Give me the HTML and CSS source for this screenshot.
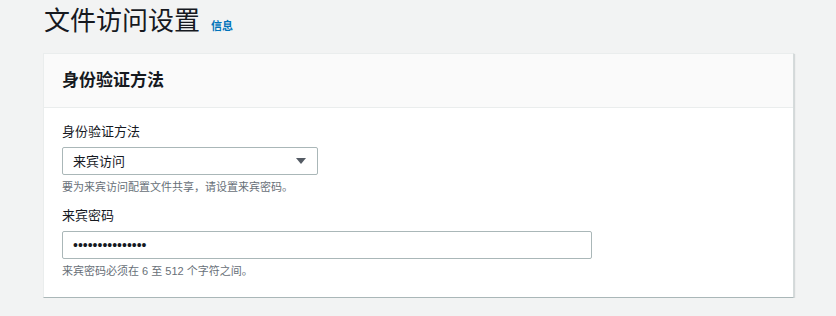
FILE: index.html
```html
<!DOCTYPE html>
<html lang="zh-CN">
<head>
    <meta charset="UTF-8">
    <meta name="viewport" content="width=device-width, initial-scale=1.0">
    <title>文件访问设置</title>
    <link rel="stylesheet" href="styles.css">
</head>
<body>
    <div class="page-title">
        <h1>文件访问设置</h1>
        <a href="#" class="info-link">信息</a>
    </div>

    <div class="panel">
        <div class="panel-header">
            <h2>身份验证方法</h2>
        </div>
        <div class="panel-body">
            <div class="form-field">
                <label for="authMethod">身份验证方法</label>
                <div class="select-wrap">
                    <select id="authMethod">
                        <option>来宾访问</option>
                        <option>Active Directory</option>
                    </select>
                    <svg class="select-arrow" width="10" height="6" viewBox="0 0 10 6">
                        <path d="M0 0 H10 L5 6 Z" fill="#545b64"/>
                    </svg>
                </div>
                <div class="hint">要为来宾访问配置文件共享，请设置来宾密码。</div>
            </div>

            <div class="form-field">
                <label for="guestPassword">来宾密码</label>
                <input type="password" id="guestPassword" class="text-input" value="guestpassword12">
                <div class="hint">来宾密码必须在 6 至 512 个字符之间。</div>
            </div>
        </div>
    </div>
</body>
</html>
```

FILE: styles.css
```css
body {
    font-family: "Liberation Sans", "Noto Sans CJK SC", sans-serif;
    margin: 0;
    padding: 0 42px 0 43px;
    background-color: #f2f3f3;
    color: #16191f;
}
.page-title {
    display: flex;
    align-items: baseline;
    gap: 11px;
    height: 42px;
    padding-left: 1px;
}
h1 {
    margin: 0;
    font-size: 26px;
    font-weight: normal;
    line-height: 42px;
}
.info-link {
    color: #0073bb;
    font-size: 11px;
    font-weight: bold;
    text-decoration: none;
}
.panel {
    margin-top: 11px;
    background-color: white;
    border-top: 1px solid #eaeded;
    border-left: 1px solid #eaeded;
    border-right: 1px solid #d5dbdb;
    border-bottom: 1px solid #aab7b8;
    box-shadow: 1px 1px 1px 0 rgba(0,28,36,0.12);
    width: 749px;
}
.panel-header {
    background-color: #fafafa;
    border-bottom: 1px solid #eaeded;
    height: 53px;
    padding: 0 18px;
}
h2 {
    margin: 0;
    font-size: 17px;
    font-weight: bold;
    line-height: 53px;
}
.panel-body {
    padding: 14px 18px 18px 18px;
}
.form-field + .form-field {
    margin-top: 11px;
}
label {
    display: block;
    font-size: 13px;
    line-height: 20px;
    margin-bottom: 5px;
}
.select-wrap {
    position: relative;
    width: 256px;
}
select, .text-input {
    display: block;
    width: 100%;
    height: 28px;
    box-sizing: border-box;
    padding: 0 10px;
    border: 1px solid #aab7b8;
    border-radius: 2px;
    background-color: white;
    font-family: inherit;
    font-size: 13px;
    color: #16191f;
}
select {
    appearance: none;
    -webkit-appearance: none;
}
.select-arrow {
    position: absolute;
    right: 12px;
    top: 11px;
    pointer-events: none;
}
.text-input {
    width: 530px;
    font-size: 14px;
}
.hint {
    margin-top: 4px;
    font-size: 11px;
    line-height: 16px;
    color: #687078;
}
```
